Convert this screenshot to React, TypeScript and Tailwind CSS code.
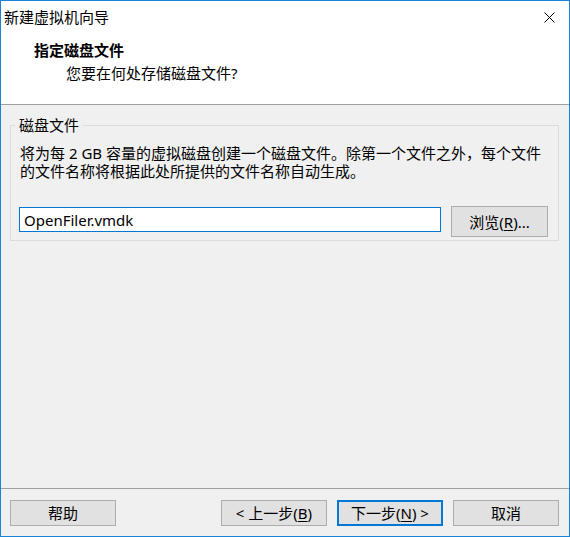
const font = "font-['Noto_Sans','Noto_Sans_CJK_SC',sans-serif]";

function Button({
  children,
  primary = false,
  className = "",
}: {
  children: React.ReactNode;
  primary?: boolean;
  className?: string;
}) {
  return (
    <button
      className={`flex h-[26px] w-[106px] items-center justify-center bg-[#e1e1e1] text-[15px] leading-[20px] text-black ${
        primary ? "border-2 border-[#0078d7]" : "border border-[#adadad]"
      } ${className}`}
    >
      {children}
    </button>
  );
}

export default function App() {
  return (
    <div
      className={`flex h-[537px] w-[570px] flex-col border border-[#1883d7] bg-[#f0f0f0] text-black ${font}`}
    >
      {/* title bar */}
      <div className="flex h-[32px] items-center justify-between bg-white pl-[3px]">
        <span className="text-[15px] leading-[20px]">新建虚拟机向导</span>
        <div className="flex h-full w-[40px] items-center justify-center">
          <svg width="11" height="11" viewBox="0 0 11 11">
            <path d="M0.5 0.5 L10.5 10.5 M10.5 0.5 L0.5 10.5" stroke="#000" strokeWidth="1" />
          </svg>
        </div>
      </div>

      {/* header */}
      <div className="h-[72px] border-b border-[#a0a0a0] bg-white pl-[33px] pt-[7px]">
        <div className="text-[15px] font-bold leading-[20px]">指定磁盘文件</div>
        <div className="mt-[3px] pl-[32px] text-[15px] leading-[20px]">您要在何处存储磁盘文件?</div>
      </div>

      {/* body */}
      <div className="flex-1">
        <fieldset className="mx-[9px] mt-[10px] w-[549px] border border-[#dcdcdc] pb-[3px] pl-[4px] pr-[10px]">
          <legend className="px-[4px] text-[15px] leading-[20px]">磁盘文件</legend>
          <div className="mt-[9px] pl-[5px] text-[15px] leading-[18px]">
            <div className="whitespace-nowrap">
              将为每 2 GB 容量的虚拟磁盘创建一个磁盘文件。除第一个文件之外，每个文件
            </div>
            <div className="whitespace-nowrap">的文件名称将根据此处所提供的文件名称自动生成。</div>
          </div>
          <div className="mt-[27px] flex items-start pl-[4px]">
            <div className="flex h-[25px] w-[422px] items-center border border-[#0078d7] bg-white pl-[4px] text-[15px] leading-[20px]">
              OpenFiler.vmdk
            </div>
            <button className="ml-auto mt-[-1px] flex h-[31px] w-[97px] items-center justify-center border border-[#adadad] bg-[#e1e1e1] text-[15px] leading-[20px]">
              浏览(<span className="underline underline-offset-2">R</span>)...
            </button>
          </div>
        </fieldset>
      </div>

      {/* footer */}
      <div className="flex h-[48px] items-start border-t border-[#a0a0a0] pt-[11px]">
        <Button className="ml-[9px]">帮助</Button>
        <div className="flex-1" />
        <div className="mr-[10px] flex gap-[10px]">
          <Button>
            &lt; 上一步(<span className="underline underline-offset-2">B</span>)
          </Button>
          <Button primary>
            下一步(<span className="underline underline-offset-2">N</span>) &gt;
          </Button>
          <Button>取消</Button>
        </div>
      </div>
    </div>
  );
}
